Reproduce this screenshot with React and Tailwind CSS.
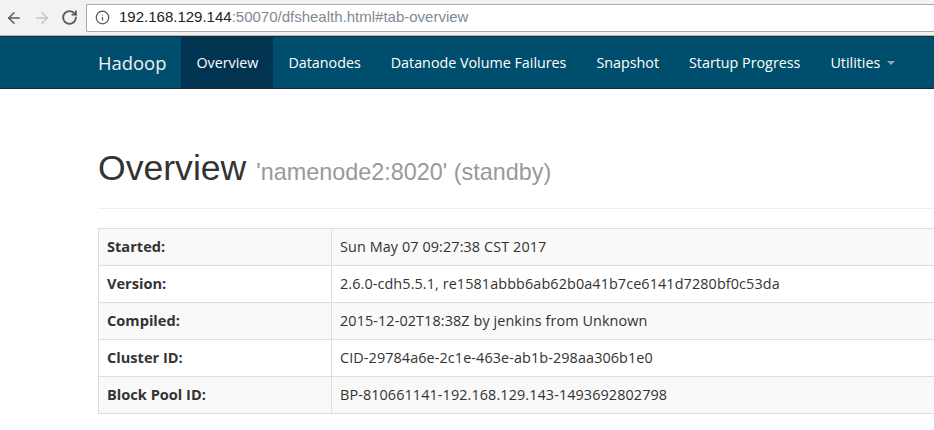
import { ArrowLeft, ArrowRight, RotateCw, Info } from 'lucide-react';

const rows = [
  { label: 'Started:', value: 'Sun May 07 09:27:38 CST 2017' },
  { label: 'Version:', value: '2.6.0-cdh5.5.1, re1581abbb6ab62b0a41b7ce6141d7280bf0c53da' },
  { label: 'Compiled:', value: '2015-12-02T18:38Z by jenkins from Unknown' },
  { label: 'Cluster ID:', value: 'CID-29784a6e-2c1e-463e-ab1b-298aa306b1e0' },
  { label: 'Block Pool ID:', value: 'BP-810661141-192.168.129.143-1493692802798' },
];

const navItems = ['Overview', 'Datanodes', 'Datanode Volume Failures', 'Snapshot', 'Startup Progress'];

export default function App() {
  return (
    <div className="w-[934px] h-[430px] overflow-hidden bg-white font-['Open_Sans',sans-serif]">
      {/* Browser toolbar */}
      <div className="h-[36px] bg-[#f2f2f2] border-b border-[#b5b5b5] flex items-center">
        <div className="flex items-center gap-[10px] pl-[5px] w-[86px]">
          <ArrowLeft size={18} strokeWidth={2} className="text-[#5a5a5a]" />
          <ArrowRight size={18} strokeWidth={2} className="text-[#c4c4c4]" />
          <RotateCw size={17} strokeWidth={2.6} className="text-[#5a5a5a]" />
        </div>
        <div className="flex-1 h-[28px] bg-white border border-[#a9a9a9] border-r-0 rounded-l-[2px] flex items-center pl-[8px]">
          <Info size={15} strokeWidth={2} className="text-[#555]" />
          <span className="ml-[9px] text-[15px] font-['Liberation_Sans',sans-serif]">
            <span className="text-[#222]">192.168.129.144</span>
            <span className="text-[#7e8a95]">:50070/dfshealth.html#tab-overview</span>
          </span>
        </div>
      </div>

      {/* Navbar */}
      <div className="h-[53px] bg-[#004e6d] border-t border-b border-[#1a2a33] flex items-stretch pl-[83px] text-white">
        <div className="px-[15px] flex items-center text-[18.4px] text-[#f2f2f2]">Hadoop</div>
        {navItems.map((item, i) => (
          <div
            key={item}
            className={
              i === 0
                ? 'px-[15px] flex items-center text-[14.3px] bg-[#003451]'
                : 'px-[15px] flex items-center text-[14.3px]'
            }
          >
            {item}
          </div>
        ))}
        <div className="px-[15px] flex items-center text-[14.3px]">
          Utilities
          <span className="ml-[7px] w-0 h-0 border-l-[4px] border-r-[4px] border-t-[4px] border-l-transparent border-r-transparent border-t-[#9aa7b0]" />
        </div>
      </div>

      {/* Content */}
      <div className="pl-[98px]">
        <div className="pt-[59px] pb-[18px] border-b border-[#eeeeee] flex items-baseline font-['Liberation_Sans',sans-serif]">
          <span className="text-[35.6px] text-[#333] leading-[40px]">Overview</span>
          <span className="ml-[10px] text-[23.4px] text-[#999]">'namenode2:8020' (standby)</span>
        </div>

        <table className="mt-[19px] w-[1000px] border-collapse text-[#333]">
          <tbody>
            {rows.map((r, i) => (
              <tr key={r.label} className={i % 2 === 0 ? 'bg-[#f9f9f9]' : 'bg-white'}>
                <td className="w-[233px] h-[37px] border border-[#dddddd] px-[8px] font-bold text-[14.6px]">
                  {r.label}
                </td>
                <td className="h-[37px] border border-[#dddddd] px-[8px] text-[14.4px] tracking-[0.1px]">
                  {r.value}
                </td>
              </tr>
            ))}
          </tbody>
        </table>
      </div>
    </div>
  );
}
